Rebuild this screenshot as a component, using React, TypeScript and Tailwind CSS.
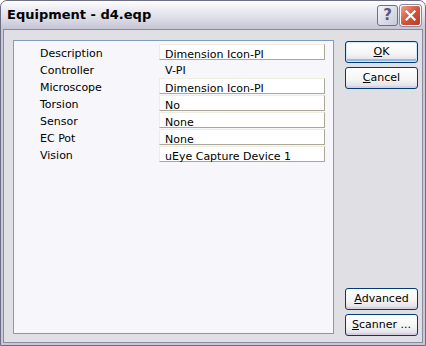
import React from 'react'

const rows: { label: string; value: string; boxed: boolean }[] = [
  { label: 'Description', value: 'Dimension Icon-PI', boxed: true },
  { label: 'Controller', value: 'V-PI', boxed: false },
  { label: 'Microscope', value: 'Dimension Icon-PI', boxed: true },
  { label: 'Torsion', value: 'No', boxed: true },
  { label: 'Sensor', value: 'None', boxed: true },
  { label: 'EC Pot', value: 'None', boxed: true },
  { label: 'Vision', value: 'uEye Capture Device 1', boxed: true },
]

function XpButton({ ul, rest, focused }: { ul: string; rest: string; focused?: boolean }) {
  return (
    <button
      className={
        'w-[73px] h-[22px] rounded-[3px] border border-[#003c74] bg-[linear-gradient(#ffffff,#f4f4f4_60%,#dcdce4)] text-[11px] text-black flex items-center justify-center ' +
        (focused ? 'shadow-[inset_0_0_0_1px_#cee7ff,inset_0_-2px_0_1px_#98b8ea]' : 'shadow-[inset_0_-2px_0_0_#d6d0e0]')
      }
    >
      <span>
        <span className="underline underline-offset-1">{ul}</span>
        {rest}
      </span>
    </button>
  )
}

export default function App() {
  return (
    <div className="w-[426px] h-[346px] bg-white" style={{ fontFamily: '"DejaVu Sans", Verdana, sans-serif' }}>
      <div className="w-[426px] h-[346px] flex flex-col rounded-t-[7px] border border-[#6c6c82] bg-[#c8c8d8] overflow-hidden">
        {/* Title bar */}
        <div className="h-[28px] flex items-center pl-[6px] pr-[4px] bg-[linear-gradient(#fefefe,#ececf2_30%,#dedee8_60%,#c4c4d4)]">
          <span className="flex-1 text-[13px] font-bold text-black">Equipment - d4.eqp</span>
          <div className="flex gap-[2px] mt-[1px]">
            <div className="w-[21px] h-[21px] rounded-[3px] border border-[#6e6e8c] bg-[linear-gradient(135deg,#f4f4fa,#c8c8da)] flex items-center justify-center text-[15px] font-bold text-[#5a5a78]">
              ?
            </div>
            <div className="w-[21px] h-[21px] rounded-[3px] border border-white bg-[linear-gradient(135deg,#f0a090,#d4553c_50%,#b83a24)] flex items-center justify-center shadow-[0_0_0_1px_#8c8ca0]">
              <svg width="11" height="11" viewBox="0 0 11 11">
                <path d="M1.5 1.5 L9.5 9.5 M9.5 1.5 L1.5 9.5" stroke="white" strokeWidth="2.2" strokeLinecap="square" />
              </svg>
            </div>
          </div>
        </div>

        {/* Client area */}
        <div className="flex-1 border-x-[2px] border-b-[2px] border-[#c8c8d8]">
          <div className="h-full border border-[#8a8aa0] bg-[#e0dfe3] flex pl-[9px] pt-[10px] text-[11px] text-black">
            <div className="w-[321px] h-[294px] border border-[#7f9db9] bg-[#f7f7fb] pt-[3px] pl-[26px]">
              {rows.map((r) => (
                <div key={r.label} className="h-[17px] flex items-start">
                  <span className="w-[119px] h-[16px] leading-[16px] pt-[2px]">{r.label}</span>
                  <div
                    className={
                      'w-[166px] h-[16px] leading-[15px] pl-[5px] pt-[2px] ' +
                      (r.boxed ? 'bg-white border-t border-l border-[#efeddf] border-b border-r border-b-[#aca899] border-r-[#aca899]' : 'pl-[6px]')
                    }
                  >
                    {r.value}
                  </div>
                </div>
              ))}
            </div>
            <div className="ml-[11px] w-[73px] h-[296px] pt-[1px] flex flex-col">
              <XpButton ul="O" rest="K" focused />
              <div className="h-[4px]" />
              <XpButton ul="C" rest="ancel" />
              <div className="flex-1" />
              <XpButton ul="A" rest="dvanced" />
              <div className="h-[4px]" />
              <XpButton ul="S" rest="canner ..." />
            </div>
          </div>
        </div>
      </div>
    </div>
  )
}
